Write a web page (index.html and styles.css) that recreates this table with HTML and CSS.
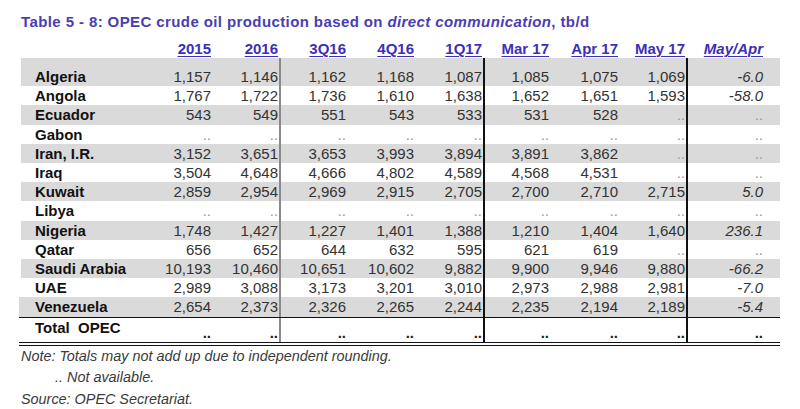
FILE: index.html
```html
<!DOCTYPE html>
<html>
<head>
<meta charset="utf-8">
<link rel="stylesheet" href="styles.css">
</head>
<body>
<div class="page">
  <h1 class="title">Table 5 - 8: OPEC crude oil production based on <em>direct communication</em>, tb/d</h1>
  <div class="tbl">
    <div class="row head">
      <div class="c name"></div>
      <div class="c"><u>2015</u></div>
      <div class="c"><u>2016</u></div>
      <div class="c"><u>3Q16</u></div>
      <div class="c"><u>4Q16</u></div>
      <div class="c"><u>1Q17</u></div>
      <div class="c"><u>Mar 17</u></div>
      <div class="c"><u>Apr 17</u></div>
      <div class="c"><u>May 17</u></div>
      <div class="c last"><u><em>May/Apr</em></u></div>
    </div>
    <div class="body">
      <div class="row g first"><div class="c name">Algeria</div><div class="c">1,157</div><div class="c b1">1,146</div><div class="c">1,162</div><div class="c">1,168</div><div class="c b2">1,087</div><div class="c">1,085</div><div class="c">1,075</div><div class="c b2">1,069</div><div class="c last i">-6.0</div></div>
      <div class="row"><div class="c name">Angola</div><div class="c">1,767</div><div class="c b1">1,722</div><div class="c">1,736</div><div class="c">1,610</div><div class="c b2">1,638</div><div class="c">1,652</div><div class="c">1,651</div><div class="c b2">1,593</div><div class="c last i">-58.0</div></div>
      <div class="row g"><div class="c name">Ecuador</div><div class="c">543</div><div class="c b1">549</div><div class="c">551</div><div class="c">543</div><div class="c b2">533</div><div class="c">531</div><div class="c">528</div><div class="c b2 na">..</div><div class="c last na">..</div></div>
      <div class="row"><div class="c name">Gabon</div><div class="c na">..</div><div class="c b1 na">..</div><div class="c na">..</div><div class="c na">..</div><div class="c b2 na">..</div><div class="c na">..</div><div class="c na">..</div><div class="c b2 na">..</div><div class="c last na">..</div></div>
      <div class="row g"><div class="c name">Iran, I.R.</div><div class="c">3,152</div><div class="c b1">3,651</div><div class="c">3,653</div><div class="c">3,993</div><div class="c b2">3,894</div><div class="c">3,891</div><div class="c">3,862</div><div class="c b2 na">..</div><div class="c last na">..</div></div>
      <div class="row"><div class="c name">Iraq</div><div class="c">3,504</div><div class="c b1">4,648</div><div class="c">4,666</div><div class="c">4,802</div><div class="c b2">4,589</div><div class="c">4,568</div><div class="c">4,531</div><div class="c b2 na">..</div><div class="c last na">..</div></div>
      <div class="row g"><div class="c name">Kuwait</div><div class="c">2,859</div><div class="c b1">2,954</div><div class="c">2,969</div><div class="c">2,915</div><div class="c b2">2,705</div><div class="c">2,700</div><div class="c">2,710</div><div class="c b2">2,715</div><div class="c last i">5.0</div></div>
      <div class="row"><div class="c name">Libya</div><div class="c na">..</div><div class="c b1 na">..</div><div class="c na">..</div><div class="c na">..</div><div class="c b2 na">..</div><div class="c na">..</div><div class="c na">..</div><div class="c b2 na">..</div><div class="c last na">..</div></div>
      <div class="row g"><div class="c name">Nigeria</div><div class="c">1,748</div><div class="c b1">1,427</div><div class="c">1,227</div><div class="c">1,401</div><div class="c b2">1,388</div><div class="c">1,210</div><div class="c">1,404</div><div class="c b2">1,640</div><div class="c last i">236.1</div></div>
      <div class="row"><div class="c name">Qatar</div><div class="c">656</div><div class="c b1">652</div><div class="c">644</div><div class="c">632</div><div class="c b2">595</div><div class="c">621</div><div class="c">619</div><div class="c b2 na">..</div><div class="c last na">..</div></div>
      <div class="row g"><div class="c name">Saudi Arabia</div><div class="c">10,193</div><div class="c b1">10,460</div><div class="c">10,651</div><div class="c">10,602</div><div class="c b2">9,882</div><div class="c">9,900</div><div class="c">9,946</div><div class="c b2">9,880</div><div class="c last i">-66.2</div></div>
      <div class="row"><div class="c name">UAE</div><div class="c">2,989</div><div class="c b1">3,088</div><div class="c">3,173</div><div class="c">3,201</div><div class="c b2">3,010</div><div class="c">2,973</div><div class="c">2,988</div><div class="c b2">2,981</div><div class="c last i">-7.0</div></div>
      <div class="row g lastrow"><div class="c name">Venezuela</div><div class="c">2,654</div><div class="c b1">2,373</div><div class="c">2,326</div><div class="c">2,265</div><div class="c b2">2,244</div><div class="c">2,235</div><div class="c">2,194</div><div class="c b2">2,189</div><div class="c last i">-5.4</div></div>
      <div class="row total"><div class="c name">Total&nbsp; OPEC</div><div class="c">..</div><div class="c b1">..</div><div class="c">..</div><div class="c">..</div><div class="c b2">..</div><div class="c">..</div><div class="c">..</div><div class="c b2">..</div><div class="c last">..</div></div>
    </div>
  </div>
  <div class="notes">
    <p>Note: Totals may not add up due to independent rounding.</p>
    <p class="indent">.. Not available.</p>
    <p class="src">Source: OPEC Secretariat.</p>
  </div>
</div>
</body>
</html>
```
FILE: styles.css
```css
html, body {
  margin: 0;
  padding: 0;
  background: #ffffff;
}
body {
  font-family: "Liberation Sans", Arial, sans-serif;
  color: #222;
}
.page {
  padding-left: 21px;
  width: 759px;
}
.title {
  margin: 13px 0 0 0;
  font-size: 15px;
  letter-spacing: 0.4px;
  line-height: 18px;
  font-weight: bold;
  color: #4a3db3;
}
.title em {
  font-style: italic;
}
.tbl {
  margin-top: 9px;
}
.row {
  display: grid;
  grid-template-columns: 126px 67px 67px 68px 68px 68px 67px 69px 67px 92px;
  font-size: 15px;
  line-height: 19.2px;
}
.c {
  box-sizing: border-box;
  text-align: right;
  padding-right: 3px;
  color: #333;
  white-space: nowrap;
}
.c.name {
  text-align: left;
  padding-left: 14px;
  font-weight: bold;
  color: #111;
}
.c.b1 {
  border-right: 2px solid #8a8a8a;
  padding-right: 1px;
}
.c.b2 {
  border-right: 2px solid #111;
  padding-right: 1px;
}
.c.last {
  padding-right: 17px;
}
.c.i {
  font-style: italic;
}
.c.na {
  color: #9a9a9a;
}
.head {
  line-height: 18px;
}
.head .c {
  font-weight: bold;
  color: #3c30b8;
}
.head u {
  text-decoration-thickness: 1px;
  text-underline-offset: 2px;
}
.row.g {
  background: #dadada;
}
.row.first .c {
  padding-top: 9px;
}
.body {
  margin-left: -2px;
  padding-left: 2px;
}
.row.lastrow {
  border-bottom: 1px solid #111;
  margin-left: -2px;
  padding-left: 2px;
}
.row.total {
  height: 24px;
  border-bottom: 4px double #111;
  margin-left: -2px;
  padding-left: 2px;
  line-height: 19px;
}
.row.total .c {
  align-self: stretch;
  display: flex;
  align-items: flex-end;
  justify-content: flex-end;
  color: #222;
  font-weight: bold;
}
.row.total .c.name {
  align-items: flex-start;
  justify-content: flex-start;
  color: #111;
}
.notes {
  font-style: italic;
  font-size: 14.4px;
  line-height: 21px;
  color: #3a3a3a;
}
.notes p {
  margin: 0;
}
.notes .indent {
  padding-left: 34px;
}
.notes .src {
  margin-top: 1px;
}
```
